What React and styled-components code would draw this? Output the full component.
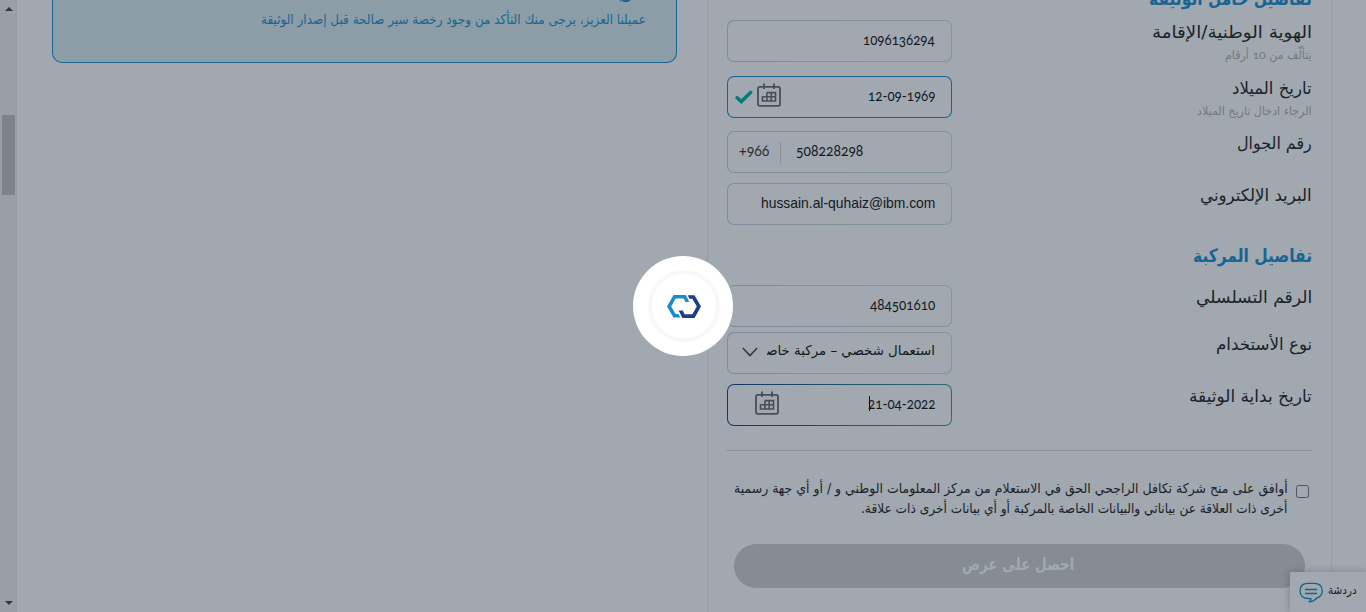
import React, { useLayoutEffect, useRef, useState } from "react";
import styled, { createGlobalStyle, css } from "styled-components";

const Global = createGlobalStyle`
  * { box-sizing: border-box; }
  body { margin: 0; background: #fff; overflow: hidden; }
`;

const blue = "#1c90d0";

const Page = styled.div`
  position: relative;
  display: flex;
  width: 1366px;
  height: 612px;
  overflow: hidden;
  background: #fff;
  color: #222;
  font-family: "DejaVu Sans Condensed", "DejaVu Sans", sans-serif;
`;

const ScrollBar = styled.div`
  display: flex;
  flex-direction: column;
  align-items: center;
  width: 17px;
  height: 612px;
  padding: 7px 0 7px;
  background: #f1f1f1;
`;
const ScrollThumb = styled.div`
  width: 13px;
  height: 80px;
  margin: 104px 0 auto;
  background: #c1c1c1;
`;

const NoteColumn = styled.div`
  width: 690px;
  padding-left: 35px;
`;
const Note = styled.div`
  display: flex;
  flex-direction: column;
  align-items: flex-end;
  width: 625px;
  height: 63px;
  padding: 0 30px;
  border: 1px solid ${blue};
  border-top: 0;
  border-radius: 0 0 10px 10px;
  background: #dcedf3;
  color: ${blue};
`;
const NoteTitle = styled.div`
  height: 8px;
  padding-bottom: 5px;
  margin-right: 1px;
  display: flex;
  align-items: flex-end;
  line-height: 22px;
  font-size: 17px;
  font-weight: 700;
`;
const NoteText = styled.div`
  font-size: 13.5px;
  line-height: 22px;
`;

const Panel = styled.section`
  direction: rtl;
  width: 625px;
  padding: 0 19px;
  border: 1px solid #efefef;
  border-width: 0 1px;
`;
const Heading = styled.h2`
  display: flex;
  align-items: ${(p) => (p.$cut ? "flex-end" : "flex-start")};
  height: ${(p) => p.$h}px;
  margin: 0;
  padding: ${(p) => (p.$cut ? "0 0 8px" : "1px 0 0")};
  color: ${blue};
  font-size: 18.5px;
  font-weight: 700;
  line-height: 26px;
`;
const Row = styled.div`
  display: flex;
  justify-content: space-between;
  height: ${(p) => p.$h}px;
`;
const Label = styled.div`
  font-size: 17px;
  line-height: 24px;
`;
const Hint = styled.div`
  margin-top: 1px;
  color: #b4b4b4;
  font-size: 12px;
  line-height: 20px;
`;
const OldDigits = styled.span`
  font-family: Lato, sans-serif;
  font-variant-numeric: oldstyle-nums;
`;

const edges = {
  idle: "linear-gradient(to right, #c6d0de, #cbe0dd)",
  valid: `linear-gradient(${blue}, ${blue})`,
  active: "linear-gradient(to right, #1d3f85, #3f9c92)",
};
const Field = styled.div`
  display: flex;
  direction: ltr;
  align-items: center;
  width: 225px;
  height: 42px;
  padding: 0 16px 2px ${(p) => p.$left || 16}px;
  border: 1px solid transparent;
  border-radius: 7px;
  background: linear-gradient(#fff, #fff) padding-box, ${(p) => edges[p.$edge || "idle"]} border-box;
  background-origin: border-box;
`;
const Value = styled.div`
  display: flex;
  justify-content: flex-end;
  margin-left: ${(p) => (p.$start ? 0 : "auto")};
  color: #111;
  ${(p) => p.$clip && css`width: 168px; padding-bottom: 4px; overflow: hidden;`}
  font-size: ${(p) => p.$size || 15}px;
  ${(p) => p.$digits && css`
    padding-bottom: 2px;
    font-family: Lato, sans-serif;
    font-variant-numeric: oldstyle-nums;
    font-size: 15.5px;
  `}
  ${(p) => p.$latin && css`font-family: "Liberation Sans", sans-serif; font-size: 14.5px;`}
  line-height: 24px;
`;
const Prefix = styled(Value)`
  width: 42px;
  margin: 2px 15px 0 0;
  height: 21px;
  line-height: 17px;
  color: #333;
  justify-content: flex-start;
  border-right: 1px solid #d8d8d8;
`;
const Caret = styled.i`
  width: 1px;
  height: 15px;
  margin: 5px -2px 0 0;
  background: #000;
`;

const Rule = styled.hr`
  height: 1px;
  margin: 0 0 0 -1px;
  border: 0;
  background: #dcdcdc;
`;
const Consent = styled.label`
  display: flex;
  height: 93px;
  padding: 27px 3px 0 0;
  gap: 8px;
  font-size: 13.5px;
  line-height: 20px;
`;
const Box = styled.span`
  width: 13px;
  height: 13px;
  margin-top: 7px;
  border: 1px solid #767676;
  border-radius: 2.5px;
`;
const Submit = styled.button`
  display: flex;
  justify-content: center;
  width: 571px;
  height: 44px;
  margin: 0 7px;
  padding: 8px 2px 0 0;
  border: 0;
  border-radius: 22px;
  background: #d0d0d0;
  color: #fff;
  font: 700 17px/24px "DejaVu Sans Condensed", "DejaVu Sans", sans-serif;
`;

const Chat = styled.div`
  position: absolute;
  right: 0;
  bottom: 0;
  display: flex;
  align-items: flex-start;
  gap: 5px;
  width: 76px;
  height: 40px;
  padding: 10px 9px 0 9px;
  background: #fff;
  box-shadow: 0 0 8px rgba(0, 0, 0, 0.25);
  font-size: 12px;
  line-height: 17px;
`;
const Overlay = styled.div`
  position: absolute;
  inset: 0;
  display: flex;
  align-items: center;
  justify-content: center;
  background: rgba(20, 37, 55, 0.4);
`;
const Loader = styled.div`
  display: flex;
  align-items: center;
  justify-content: center;
  width: 100px;
  height: 100px;
  border-radius: 50%;
  background: #fff;
`;
const Ring = styled.div`
  display: flex;
  align-items: center;
  justify-content: center;
  width: 72px;
  height: 72px;
  margin-left: 1px;
  border: 4px solid #f8f8f8;
  border-radius: 50%;
`;

const FitOuter = styled.span`
  display: flex;
  direction: rtl;
  width: ${(p) => p.$w}px;
  white-space: nowrap;
`;
const FitInner = styled.span`
  flex: none;
  direction: ${(p) => (p.$ltr ? "ltr" : "rtl")};
  transform-origin: 100% 50%;
`;

/* Keeps a line of text at a fixed measure by condensing or widening it. */
function Fit({ w, ltr, children }) {
  const ref = useRef(null);
  const [scale, setScale] = useState(1);
  useLayoutEffect(() => {
    setScale(w / ref.current.offsetWidth);
  }, [w]);
  return (
    <FitOuter $w={w}>
      <FitInner ref={ref} $ltr={ltr} style={{ transform: `scaleX(${scale})` }}>
        {children}
      </FitInner>
    </FitOuter>
  );
}

const Arrow = ({ down }) => (
  <svg width="8" height="4" viewBox="0 0 8 4">
    <path d={down ? "M0 0h8L4 4z" : "M0 4h8L4 0z"} fill="#444" />
  </svg>
);

const Tick = () => (
  <svg width="18" height="15" viewBox="0 0 18 15" fill="none">
    <path d="M2.200 8.700 6.300 12.600 15.600 3.400" stroke="#00b4a0" strokeWidth="3.500" strokeLinecap="round" />
  </svg>
);

const CalendarSvg = styled.svg`
  flex: none;
  margin: 0 0 3px ${(p) => p.$ml}px;
`;
const Calendar = ({ ml = 0 }) => (
  <CalendarSvg $ml={ml} width="24" height="24" viewBox="0 0 24 24" fill="none" stroke="#6c6c6c" strokeWidth="1.8">
    <rect x="1" y="3.900" width="22" height="19" rx="1.600" />
    <path d="M7 .5v5.600M17 .5v5.600" />
    <path d="M9.900 9.600h8.600v8.400H5.500v-4.200h13M9.900 9.600v8.400M14.200 9.600v8.400" strokeWidth="1.600" />
  </CalendarSvg>
);

const ChevronSvg = styled.svg`
  flex: none;
`;
const Chevron = () => (
  <ChevronSvg width="16" height="10" viewBox="0 0 16 10" fill="none">
    <path d="M.8 1 8 8.600 15.200 1" stroke="#444" strokeWidth="1.500" />
  </ChevronSvg>
);

const Logo = () => (
  <svg width="34" height="23" viewBox="0 0 34 23">
    <path d="M6.500 0H18.800L22.300 6.900H18.400L16.700 3.600H8.700L4.200 11.400 8.700 19H11.500L13.300 22.600H6.500L0 11.400Z" fill="#1b8ccb" />
    <path d="M27.500 22.900H15.400L11.700 15.600H15.800L17.500 19.200H25.300L29.800 11.500 25.300 3.800H22.500L20.700.2H27.500L34 11.500Z" fill="#1b3f84" />
  </svg>
);

const Bubble = () => (
  <svg width="24" height="21" viewBox="0 0 24 21" fill="none" stroke="#0e92c8" strokeWidth="1.300">
    <path d="M9.500 16.500C4.500 16.500 1 14 1 9.100 1 3.900 4.300 1.400 8.800 1.400h6.400c4.500 0 8 2.500 8 7.700 0 4-2.200 6-5.400 6.900-2.300 2.700-4.500 3.800-8 3.900 1.700-.8 2.300-1.700 2.300-3.100z" />
    <path d="M6 7.500h12M6 11.500h12" />
  </svg>
);

function Entry({ h, label, w, hint, hintW, children }) {
  return (
    <Row $h={h}>
      <div>
        <Label><Fit w={w}>{label}</Fit></Label>
        {hint && <Hint><Fit w={hintW}>{hint}</Fit></Hint>}
      </div>
      {children}
    </Row>
  );
}

export default function App() {
  return (
    <Page>
      <Global />
      <ScrollBar>
        <Arrow />
        <ScrollThumb />
        <Arrow down />
      </ScrollBar>
      <NoteColumn>
        <Note>
          <NoteTitle><Fit w={36}>تنويه</Fit></NoteTitle>
          <NoteText><Fit w={385}>عميلنا العزيز، يرجى منك التأكد من وجود رخصة سير صالحة قبل إصدار الوثيقة</Fit></NoteText>
        </Note>
      </NoteColumn>
      <Panel>
        <Heading $cut $h={20}><Fit w={163}>تفاصيل حامل الوثيقة</Fit></Heading>
        <Entry h={56} label="الهوية الوطنية/الإقامة" w={160} hint={<>يتألّف من <OldDigits>10</OldDigits> أرقام</>} hintW={87}>
          <Field><Value $digits><Fit w={72} ltr>1096136294</Fit></Value></Field>
        </Entry>
        <Entry h={55} label="تاريخ الميلاد" w={80} hint="الرجاء ادخال تاريخ الميلاد" hintW={115}>
          <Field $edge="valid" $left={7}>
            <Tick />
            <Calendar ml={4} />
            <Value $digits><Fit w={67} ltr>12-09-1969</Fit></Value>
          </Field>
        </Entry>
        <Entry h={52} label="رقم الجوال" w={75}>
          <Field $left={11}>
            <Prefix $digits><Fit w={30} ltr>+966</Fit></Prefix>
            <Value $digits $start><Fit w={67} ltr>508228298</Fit></Value>
          </Field>
        </Entry>
        <Entry h={59} label="البريد الإلكتروني" w={112}>
          <Field><Value $latin><Fit w={174} ltr>hussain.al-quhaiz@ibm.com</Fit></Value></Field>
        </Entry>
        <Heading $h={43}><Fit w={119}>تفاصيل المركبة</Fit></Heading>
        <Entry h={47} label="الرقم التسلسلي" w={116}>
          <Field><Value $digits><Fit w={65} ltr>484501610</Fit></Value></Field>
        </Entry>
        <Entry h={52} label="نوع الأستخدام" w={96}>
          <Field $left={14}>
            <Chevron />
            <Value $clip $size={13.5}><Fit w={176}>استعمال شخصي – مركبة خاصة</Fit></Value>
          </Field>
        </Entry>
        <Entry h={66} label="تاريخ بداية الوثيقة" w={123}>
          <Field $edge="active" $left={27}>
            <Calendar />
            <Value $digits><Caret /><Fit w={67} ltr>21-04-2022</Fit></Value>
          </Field>
        </Entry>
        <Rule />
        <Consent>
          <Box />
          <div>
            <Fit w={554}>أوافق على منح شركة تكافل الراجحي الحق في الاستعلام من مركز المعلومات الوطني و / أو أي جهة رسمية</Fit>
            <Fit w={427}>أخرى ذات العلاقة عن بياناتي والبيانات الخاصة بالمركبة أو أي بيانات أخرى ذات علاقة.</Fit>
          </div>
        </Consent>
        <Submit><Fit w={112}>احصل على عرض</Fit></Submit>
      </Panel>
      <Chat>
        <Bubble />
        <Fit w={29}>دردشة</Fit>
      </Chat>
      <Overlay>
        <Loader><Ring><Logo /></Ring></Loader>
      </Overlay>
    </Page>
  );
}
